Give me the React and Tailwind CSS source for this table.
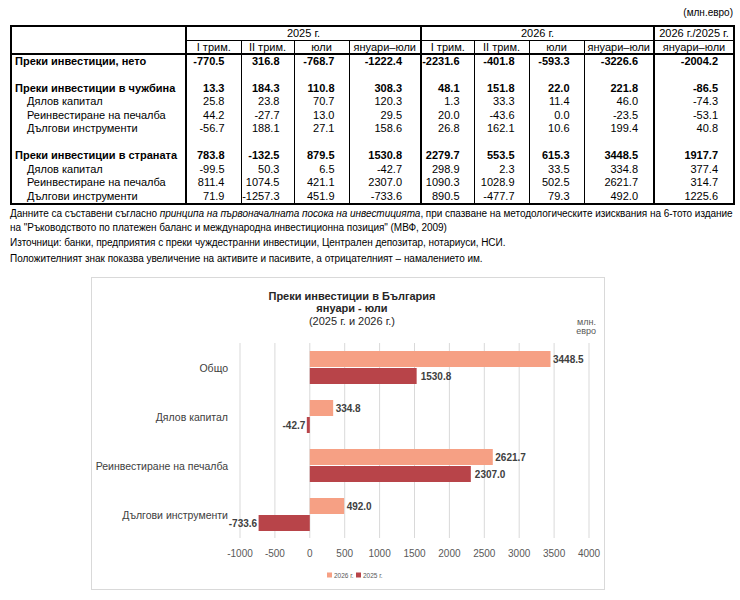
import React from "react";

const rows = [
  { label: "Преки инвестиции, нето", bold: true, v: ["-770.5", "316.8", "-768.7", "-1222.4", "-2231.6", "-401.8", "-593.3", "-3226.6", "-2004.2"] },
  { blank: true },
  { label: "Преки инвестиции в чужбина", bold: true, v: ["13.3", "184.3", "110.8", "308.3", "48.1", "151.8", "22.0", "221.8", "-86.5"] },
  { label: "Дялов капитал", v: ["25.8", "23.8", "70.7", "120.3", "1.3", "33.3", "11.4", "46.0", "-74.3"] },
  { label: "Реинвестиране на печалба", v: ["44.2", "-27.7", "13.0", "29.5", "20.0", "-43.6", "0.0", "-23.5", "-53.1"] },
  { label: "Дългови инструменти", v: ["-56.7", "188.1", "27.1", "158.6", "26.8", "162.1", "10.6", "199.4", "40.8"] },
  { blank: true },
  { label: "Преки инвестиции в страната", bold: true, v: ["783.8", "-132.5", "879.5", "1530.8", "2279.7", "553.5", "615.3", "3448.5", "1917.7"] },
  { label: "Дялов капитал", v: ["-99.5", "50.3", "6.5", "-42.7", "298.9", "2.3", "33.5", "334.8", "377.4"] },
  { label: "Реинвестиране на печалба", v: ["811.4", "1074.5", "421.1", "2307.0", "1090.3", "1028.9", "502.5", "2621.7", "314.7"] },
  { label: "Дългови инструменти", v: ["71.9", "-1257.3", "451.9", "-733.6", "890.5", "-477.7", "79.3", "492.0", "1225.6"] },
];

// per data column: right border
const borderCls = [
  "border-r border-black",
  "border-r border-black",
  "border-r border-black",
  "border-r-2 border-black",
  "border-r border-black",
  "border-r border-black",
  "border-r border-black",
  "border-r-2 border-black",
  "border-r-2 border-black",
];

// per data column: right padding of the numbers
const padCls = ["pr-[16px]", "pr-[14px]", "pr-[14px]", "pr-[18px]", "pr-[14px]", "pr-[14px]", "pr-[14px]", "pr-[15px]", "pr-[15px]"];

const subHead = ["I трим.", "II трим.", "юли", "януари–юли", "I трим.", "II трим.", "юли", "януари–юли", "януари–юли"];

const cats = [
  { name: "Общо", a: 3448.5, b: 1530.8 },
  { name: "Дялов капитал", a: 334.8, b: -42.7 },
  { name: "Реинвестиране на печалба", a: 2621.7, b: 2307.0 },
  { name: "Дългови инструменти", a: 492.0, b: -733.6 },
];

const X = (v) => 217.8 + v * 0.0698;
const ticks = [-1000, -500, 0, 500, 1000, 1500, 2000, 2500, 3000, 3500, 4000];

function Chart() {
  return (
    <svg width="512" height="251" className="block" style={{ fontFamily: '"Liberation Sans", Arial, sans-serif' }}>
      {ticks.map((t) => (
        <g key={t}>
          <line x1={X(t)} x2={X(t)} y1="5" y2="200" stroke="#d9d9d9" strokeWidth="1" />
          <text x={X(t)} y="218.5" textAnchor="middle" fontSize="10" fill="#595959">{t}</text>
        </g>
      ))}
      {cats.map((c, i) => {
        const cy = 29.5 + i * 49;
        const x0 = X(0);
        const xa = X(c.a);
        const xb = X(c.b);
        return (
          <g key={c.name}>
            <text x="136" y={cy} dominantBaseline="central" textAnchor="end" fontSize="10.5" fill="#404040">{c.name}</text>
            <rect x={Math.min(x0, xa)} y={cy - 16.5} width={Math.abs(xa - x0)} height="16" fill="#f6a084" />
            <rect x={Math.min(x0, xb)} y={cy + 0.5} width={Math.abs(xb - x0)} height="16" fill="#b84449" />
            <text x={c.a >= 0 ? xa + 2.5 : xa - 2.5} y={cy - 8.5} dominantBaseline="central" textAnchor={c.a >= 0 ? "start" : "end"} fontSize="10" fontWeight="bold" fill="#404040">{c.a.toFixed(1)}</text>
            <text x={c.b >= 0 ? xb + 4 : xb - 1.5} y={cy + 8.5} dominantBaseline="central" textAnchor={c.b >= 0 ? "start" : "end"} fontSize="10" fontWeight="bold" fill="#404040">{c.b.toFixed(1)}</text>
          </g>
        );
      })}
      <rect x="235" y="234.5" width="5" height="5" fill="#f6a084" />
      <text x="242" y="237" dominantBaseline="central" fontSize="6.5" fill="#595959">2026 г.</text>
      <rect x="264" y="234.5" width="5" height="5" fill="#b84449" />
      <text x="271" y="237" dominantBaseline="central" fontSize="6.5" fill="#595959">2025 г.</text>
    </svg>
  );
}

export default function App() {
  return (
    <div className="w-[740px] h-[600px] bg-white pl-[10px] pt-[7px] text-black overflow-hidden" style={{ fontFamily: '"Liberation Sans", Arial, sans-serif' }}>
      <div className="w-[723px] text-right text-[10px] leading-[12px] mb-[6px]">(млн.евро)</div>

      <table className="w-[723px] border-collapse border-2 border-black table-fixed text-[11px]">
        <colgroup>
          <col className="w-[175px]" />
          <col className="w-[55px]" />
          <col className="w-[53px]" />
          <col className="w-[55px]" />
          <col className="w-[72px]" />
          <col className="w-[53px]" />
          <col className="w-[55px]" />
          <col className="w-[55px]" />
          <col className="w-[70px]" />
          <col className="w-[80px]" />
        </colgroup>
        <thead>
          <tr className="h-[14px]">
            <th rowSpan={2} className="border-r-2 border-b-2 border-black p-0"></th>
            <th colSpan={4} className="border-r-2 border-b border-black p-0 font-normal leading-[13px] text-center">2025 г.</th>
            <th colSpan={4} className="border-r-2 border-b border-black p-0 font-normal leading-[13px] text-center">2026 г.</th>
            <th className="border-b border-black p-0 font-normal leading-[13px] text-center whitespace-nowrap">2026 г./2025 г.</th>
          </tr>
          <tr className="h-[13px]">
            {subHead.map((h, i) => (
              <th key={i} className={`${borderCls[i]} border-b-2 p-0 font-normal leading-[12px] text-center whitespace-nowrap`}>{h}</th>
            ))}
          </tr>
        </thead>
        <tbody>
          {rows.map((r, ri) => (
            <tr key={ri} className="h-[13.5px]">
              <td className={`border-r-2 border-black p-0 leading-[13px] whitespace-nowrap ${r.bold ? "font-bold pl-[3px]" : "pl-[15px]"}`}>{r.label}</td>
              {(r.v || Array(9).fill("")).map((v, i) => (
                <td key={i} className={`${borderCls[i]} ${padCls[i]} py-0 pl-0 leading-[13px] text-right ${r.bold ? "font-bold" : ""}`}>{v}</td>
              ))}
            </tr>
          ))}
        </tbody>
      </table>

      <div className="text-[10px] leading-[14px] mt-[2px] whitespace-nowrap tracking-[-0.04px]">
        <p>
          Данните са съставени съгласно <i>принципа на първоначалната посока на инвестицията</i>, при спазване на методологическите изисквания на 6-тото издание
          <br />
          на "Ръководството по платежен баланс и международна инвестиционна позиция" (МВФ, 2009)
        </p>
        <p className="mt-[1px]">Източници: банки, предприятия с преки чуждестранни инвестиции, Централен депозитар, нотариуси, НСИ.</p>
        <p className="mt-[2px]">Положителният знак показва увеличение на активите и пасивите, а отрицателният – намалението им.</p>
      </div>

      <div className="ml-[81px] mt-[11px] w-[514px] h-[313px] border border-[#d9d9d9] bg-white">
        <div className="h-[60px] grid grid-cols-[1fr_auto_1fr]">
          <div></div>
          <div className="ml-[8px] pt-[12px] text-center text-[11px] leading-[12.5px] text-[#262626]">
            <div className="font-bold">Преки инвестиции в България</div>
            <div className="font-bold">януари - юли</div>
            <div>(2025 г. и 2026 г.)</div>
          </div>
          <div className="pt-[40px] pr-[8px] text-right text-[9px] leading-[9px] text-[#595959]">
            <div>млн.</div>
            <div>евро</div>
          </div>
        </div>
        <Chart />
      </div>
    </div>
  );
}
